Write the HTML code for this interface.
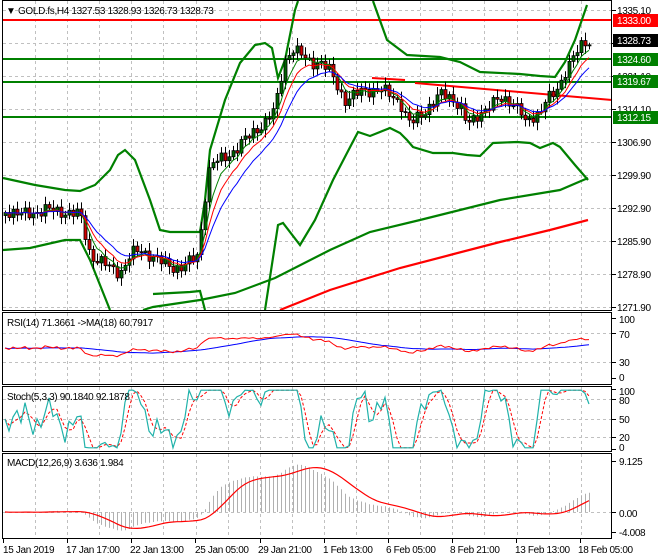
<!DOCTYPE html>
<html><head><meta charset="utf-8"><style>
body{margin:0;background:#fff;width:660px;height:560px;overflow:hidden;font-family:"Liberation Sans",sans-serif}
svg{position:absolute;left:0;top:0}
text{font-family:"Liberation Sans",sans-serif;font-size:10px;letter-spacing:-0.35px;fill:#000}
</style></head><body>
<svg id="s" width="660" height="560" viewBox="0 0 660 560">
<rect width="660" height="560" fill="#fff"/>
<g id="grid" stroke="#c0c0c0" stroke-dasharray="3,3" stroke-width="1"></g>
<g id="plot"></g>
<g fill="none" stroke="#000" stroke-width="1">
<rect x="2.5" y="0.5" width="609" height="310"/>
<rect x="2.5" y="312.5" width="609" height="72"/>
<rect x="2.5" y="386.5" width="609" height="65"/>
<rect x="2.5" y="453.5" width="609" height="85"/>
</g>
<g id="ticks" stroke="#000"></g>
<text x="6" y="14" font-size="9">▼</text>
<text x="18" y="14">GOLD.fs,H4  1327.53 1328.93 1326.73 1328.73</text>
<text x="7" y="326">RSI(14) 71.3661  -&gt;MA(18) 60.7917</text>
<text x="7" y="400">Stoch(5,3,3) 90.1840 92.1878</text>
<text x="7" y="466">MACD(12,26,9) 3.636 1.984</text>
<g>
<text x="617" y="14">1335.10</text>
<text x="617" y="80">1321.10</text>
<text x="617" y="113">1314.10</text>
<text x="617" y="146">1306.90</text>
<text x="617" y="179">1299.90</text>
<text x="617" y="212">1292.90</text>
<text x="617" y="245">1285.90</text>
<text x="617" y="278">1278.90</text>
<text x="617" y="311">1271.90</text>
<rect x="613" y="14" width="45" height="13" fill="#f00"/><text x="617" y="24" style="fill:#fff">1333.00</text>
<rect x="613" y="34" width="45" height="13" fill="#000"/><text x="617" y="44" style="fill:#fff">1328.73</text>
<rect x="613" y="53" width="45" height="13" fill="#008000"/><text x="617" y="63" style="fill:#fff">1324.60</text>
<rect x="613" y="75" width="45" height="13" fill="#008000"/><text x="617" y="85" style="fill:#fff">1319.67</text>
<rect x="613" y="111" width="45" height="13" fill="#008000"/><text x="617" y="121" style="fill:#fff">1312.15</text>
<text x="619" y="323">100</text>
<text x="619" y="338">70</text>
<text x="619" y="366">30</text>
<text x="619" y="381">0</text>
<text x="619" y="395">100</text>
<text x="619" y="404">80</text>
<text x="619" y="423">50</text>
<text x="619" y="441">20</text>
<text x="619" y="451">0</text>
<text x="619" y="465">9.125</text>
<text x="619" y="517">0.00</text>
<text x="619" y="536">-4.008</text>
</g>
<g>
<text x="3" y="553">15 Jan 2019</text>
<text x="66" y="553">17 Jan 17:00</text>
<text x="130" y="553">22 Jan 13:00</text>
<text x="195" y="553">25 Jan 05:00</text>
<text x="258" y="553">29 Jan 21:00</text>
<text x="323" y="553">1 Feb 13:00</text>
<text x="386" y="553">6 Feb 05:00</text>
<text x="450" y="553">8 Feb 21:00</text>
<text x="515" y="553">13 Feb 13:00</text>
<text x="578" y="553">18 Feb 05:00</text>
</g>
</svg>
<script>
(function(){
var NS="http://www.w3.org/2000/svg";
function el(p,t,a){var e=document.createElementNS(NS,t);for(var k in a)e.setAttribute(k,a[k]);p.appendChild(e);return e;}
var g=document.getElementById('grid'),P=document.getElementById('plot'),T=document.getElementById('ticks');
var vx=[];for(var k=0;k<18;k++)vx.push(35+32.1*k);
vx.forEach(function(x){x=Math.round(x)+.5;
 el(g,'line',{x1:x,y1:1,x2:x,y2:310});el(g,'line',{x1:x,y1:313,x2:x,y2:384});
 el(g,'line',{x1:x,y1:387,x2:x,y2:451});el(g,'line',{x1:x,y1:454,x2:x,y2:538});});
[10,43,76,109,142,175,208,241,274,307].forEach(function(y){el(g,'line',{x1:3,y1:y+.5,x2:611,y2:y+.5});});
[333,362,399,419,437,512].forEach(function(y){el(g,'line',{x1:3,y1:y+.5,x2:611,y2:y+.5});});
[3,67,131,195,260,324,388,452,516,580].forEach(function(x){el(T,'line',{x1:x+.5,y1:539,x2:x+.5,y2:543});});
[10,43,76,109,142,175,208,241,274,307,318,333,362,378,389,399,419,437,449,461,512,532].forEach(function(y){el(T,'line',{x1:612,y1:y+.5,x2:616,y2:y+.5});});
function pl(pts,c,w,d){var a={points:pts.map(function(p){return p.join(',')}).join(' '),fill:'none',stroke:c,'stroke-width':w};if(d)a['stroke-dasharray']=d;return el(P,'polyline',a);}
pl([[3,20],[611,20]],'#f00',2);
pl([[3,59],[611,59]],'#008000',2);
pl([[3,82],[611,82]],'#008000',2);
pl([[3,117],[611,117]],'#008000',2);
pl([[3,178],[35,185],[65,190],[80,191],[95,185],[110,170],[118,155],[125,150],[135,160],[150,200],[160,230],[170,232],[200,232],[205,200],[210,150],[225,100],[240,63],[255,45],[265,43],[272,48],[278,78],[285,60],[295,10],[298,1]],'#008000',2.2);
pl([[373,1],[387,40],[407,55],[440,57],[460,62],[480,72],[520,74],[540,76],[555,77],[565,62],[575,40],[587,5]],'#008000',2.2);
pl([[3,250],[30,248],[65,240],[80,240],[90,260],[100,285],[110,310]],'#008000',2.2);
pl([[153,294],[190,292],[200,291],[205,310]],'#008000',2.2);
pl([[265,310],[278,225],[283,223],[300,245],[315,220],[333,180],[347,153],[358,132],[370,136],[390,128],[400,133],[407,140],[413,147],[433,153],[453,153],[467,155],[480,156],[493,143],[517,142],[530,143],[540,148],[553,143],[560,147],[575,165],[588,180]],'#008000',2.2);
pl([[143,310],[153,307],[200,300],[235,293],[275,278],[330,250],[370,232],[420,220],[500,200],[560,190],[588,178]],'#008000',2.2);
pl([[280,310],[330,290],[400,268],[450,255],[500,242],[550,230],[588,220]],'#f00',2.2);
pl([[372,78],[405,80]],'#f00',2);pl([[415,83],[612,100]],'#f00',2);
var K=[[5,210],[20,215],[45,210],[65,212],[80,215],[85,235],[90,255],[100,262],[110,268],[120,272],[125,265],[130,255],[140,250],[150,255],[160,262],[170,266],[180,268],[190,262],[198,255],[202,220],[205,195],[210,165],[220,160],[235,150],[245,140],[255,130],[265,122],[275,110],[280,80],[285,60],[292,48],[300,55],[310,62],[320,62],[330,72],[340,92],[345,100],[355,95],[365,90],[380,90],[390,95],[400,102],[405,115],[410,125],[420,115],[430,105],[440,95],[450,97],[460,105],[465,120],[470,125],[480,112],[490,105],[500,100],[510,100],[520,110],[525,125],[535,115],[540,110],[545,100],[555,95],[560,85],[565,70],[570,60],[578,50],[585,45],[589,42]];
function iy(x){for(var i=1;i<K.length;i++)if(x<=K[i][0]){var a=K[i-1],b=K[i];return a[1]+(b[1]-a[1])*(x-a[0])/(b[0]-a[0]);}return K[K.length-1][1];}
var C=[],X=[];var n=147;
for(var i=0;i<n;i++){var x=5+4*i;X.push(x);C.push(iy(x)+4.5*Math.sin(i*2.3)+3*Math.sin(i*0.9+1));}
for(var i=0;i<n;i++){var o=i?C[i-1]:C[0]+3,c=C[i];var hi=Math.min(o,c)-2-Math.abs(Math.sin(i*1.7))*6,lo=Math.max(o,c)+2+Math.abs(Math.cos(i*1.3))*6;var x=X[i]+.5;
 el(P,'line',{x1:x,y1:hi,x2:x,y2:lo,stroke:'#000','stroke-width':1});
 var t=Math.min(o,c),h=Math.max(Math.abs(o-c),1);
 el(P,'rect',{x:x-1.5,y:t,width:3,height:h,fill:c<o?'#006400':'#d00000',stroke:'#000','stroke-width':.8});}
function ema(a,p){var k=2/(p+1),r=[a[0]];for(var i=1;i<a.length;i++)r.push(r[i-1]+k*(a[i]-r[i-1]));return r;}
function line(v,c,w,d){pl(v.map(function(y,i){return [X[i],y.toFixed(1)]}),c,w,d);}
line(ema(C,5),'#008000',1);line(ema(C,8),'#f00',1);line(ema(C,13),'#00f',1);
var pr=C.map(function(y){return 1335.1-(y-10)/4.714;});
var r=[],ag=0,al=0;for(var i=0;i<n;i++){var d=i?pr[i]-pr[i-1]:0;var gg=Math.max(d,0),ll=Math.max(-d,0);if(i==0){ag=.5;al=.5;}ag=(ag*13+gg)/14;al=(al*13+ll)/14;r.push(100-100/(1+ag/al));}
r=r.map(function(v){return 50+(v-50)*0.6;});
function sma(a,p){return a.map(function(v,i){var s=0,c=0;for(var j=Math.max(0,i-p+1);j<=i;j++){s+=a[j];c++;}return s/c;});}
var rm=sma(r,18);
function ry(v){return 378-v*0.6;}
pl(rm.map(function(v,i){return [X[i],ry(v).toFixed(1)]}),'#00f',1);
pl(r.map(function(v,i){return [X[i],ry(v).toFixed(1)]}),'#f00',1);
var kk=[];for(var i=0;i<n;i++){var h=-1e9,l=1e9;for(var j=Math.max(0,i-4);j<=i;j++){h=Math.max(h,pr[j]+0.3);l=Math.min(l,pr[j]-0.3);}kk.push(100*(pr[i]-l)/(h-l));}
kk=sma(kk,2);kk=kk.map(function(v){return Math.max(2,Math.min(98,50+(v-50)*1.25));});var dd=sma(kk,3);
function sy(v){return 449-v*0.6;}
pl(dd.map(function(v,i){return [X[i],sy(v).toFixed(1)]}),'#f00',1,'3,2');
pl(kk.map(function(v,i){return [X[i],sy(v).toFixed(1)]}),'#20b2aa',1.2);
var e12=ema(pr,12),e26=ema(pr,26);var m=e12.map(function(v,i){return v-e26[i];});var sg=sma(m,9);
function my(v){return 512-v*5.6;}
for(var i=0;i<n;i++)el(P,'line',{x1:X[i]+.5,y1:512,x2:X[i]+.5,y2:my(m[i]).toFixed(1),stroke:'#b0b0b0','stroke-width':1});
pl(sg.map(function(v,i){return [X[i],my(v).toFixed(1)]}),'#f00',1.2);
})();
</script>
</body></html>
